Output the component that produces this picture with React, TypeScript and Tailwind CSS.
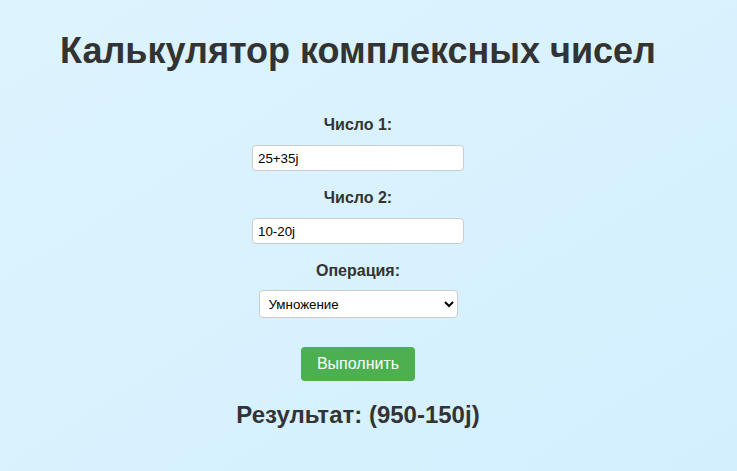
export default function App() {
  return (
    <div className="min-h-[471px] w-full bg-gradient-to-br from-[#ddf4fe] to-[#d3effe] font-['Liberation_Sans',Arial,sans-serif] text-[#333]">
      <div className="flex w-[716px] flex-col items-center">
        <h1 className="mt-[31px] text-[36px] font-bold leading-[40px]">Калькулятор комплексных чисел</h1>

        <label className="mt-[45px] text-[16px] font-bold leading-[18px]">Число 1:</label>
        <input
          defaultValue="25+35j"
          className="mt-[11px] h-[26px] w-[212px] rounded-[4px] border border-[#ccc] bg-white px-[5px] text-[13.33px] text-black outline-none"
        />

        <label className="mt-[18px] text-[16px] font-bold leading-[18px]">Число 2:</label>
        <input
          defaultValue="10-20j"
          className="mt-[11px] h-[26px] w-[212px] rounded-[4px] border border-[#ccc] bg-white px-[5px] text-[13.33px] text-black outline-none"
        />

        <label className="mt-[18px] text-[16px] font-bold leading-[18px]">Операция:</label>
        <select
          defaultValue="mul"
          className="mt-[10px] h-[28px] w-[199px] rounded-[4px] border border-[#ccc] bg-white px-[5px] text-[13.33px] text-black outline-none"
        >
          <option value="add">Сложение</option>
          <option value="sub">Вычитание</option>
          <option value="mul">Умножение</option>
          <option value="div">Деление</option>
        </select>

        <button className="mt-[29px] h-[34px] w-[114px] rounded-[4px] bg-[#4caf50] text-[16px] text-white">Выполнить</button>

        <h2 className="mt-[20px] text-[24px] font-bold leading-[28px]">Результат: (950-150j)</h2>
      </div>
    </div>
  )
}
